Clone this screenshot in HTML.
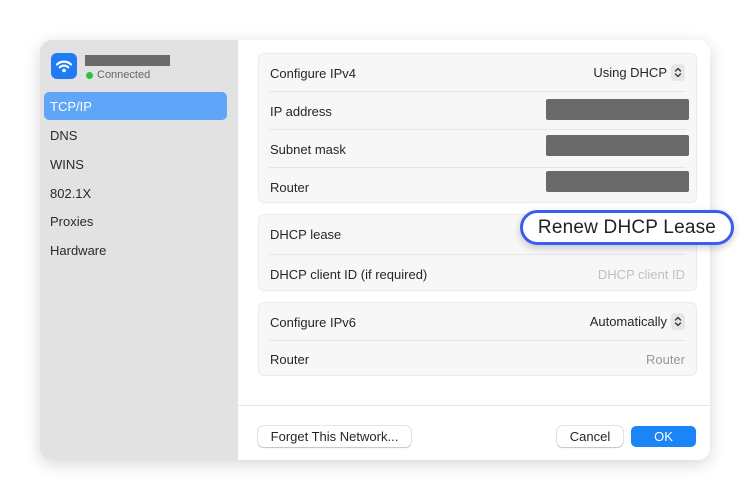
<!DOCTYPE html>
<html><head><style>
*{margin:0;padding:0;box-sizing:border-box}
body{width:750px;height:500px;background:#fff;font-family:"Liberation Sans",sans-serif;position:relative;overflow:hidden;color:#262626}
.win{position:absolute;left:40px;top:40px;width:670px;height:420px;border-radius:12px;background:#fff;box-shadow:0 4px 16px rgba(0,0,0,0.16);overflow:hidden}
.side{position:absolute;left:0;top:0;width:198px;height:420px;background:#e3e2e2}
.a{position:absolute}
.grp{position:absolute;left:218px;width:439px;background:#f7f7f7;border:1px solid #ebebeb;border-radius:6px}
.lbl{position:absolute;left:11px;font-size:13px;color:#262626}
.sep{position:absolute;left:10px;right:10px;height:1px;background:#e6e6e6}
.bar{position:absolute;left:287px;width:143px;height:21px;background:#696969;border-radius:2px}
.r{position:absolute;right:11px;font-size:13px;display:flex;align-items:center}
.stp{display:inline-block;width:14px;height:17px;background:#e6e6e6;border-radius:4px;margin-left:4px}
.nav{position:absolute;left:10px;font-size:13px;color:#2a2a2a}
.btn{position:absolute;top:386px;height:21px;border-radius:5px;background:#fff;box-shadow:0 0 0 0.5px rgba(0,0,0,0.2),0 1px 1px rgba(0,0,0,0.15);font-size:13px;text-align:center;line-height:21px}
</style></head><body>
<div class="win">
 <div class="side">
  <div class="a" style="left:11px;top:13px;width:26px;height:26px;border-radius:6px;background:#1f7cf5">
   <svg width="26" height="26" viewBox="0 0 26 26"><g fill="none" stroke="#fff" stroke-width="2.2" stroke-linecap="round"><path d="M6 11.5a10 10 0 0 1 14 0"/><path d="M8.8 14.3a6 6 0 0 1 8.4 0"/></g><circle cx="13" cy="17.5" r="1.8" fill="#fff"/></svg>
  </div>
  <div class="a" style="left:45px;top:15px;width:85px;height:11px;background:#6a6a6a"></div>
  <div class="a" style="left:46px;top:32px;width:7px;height:7px;border-radius:50%;background:#2ec23c"></div>
  <div class="a" style="left:57px;top:29px;font-size:11px;color:#666">Connected</div>
  <div class="a" style="left:4px;top:52px;width:183px;height:28px;border-radius:5px;background:#5fa6f8"></div>
  <div class="nav" style="top:59px;color:#fff">TCP/IP</div>
  <div class="nav" style="top:88px">DNS</div>
  <div class="nav" style="top:117px">WINS</div>
  <div class="nav" style="top:146px">802.1X</div>
  <div class="nav" style="top:174px">Proxies</div>
  <div class="nav" style="top:203px">Hardware</div>
 </div>
 <div class="grp" style="top:13px;height:150px">
  <div class="lbl" style="top:12px">Configure IPv4</div>
  <div class="r" style="top:10px">Using DHCP <span class="stp"><svg width="14" height="17" viewBox="0 0 14 17"><path d="M4.5 7L7 4.5 9.5 7M4.5 10L7 12.5 9.5 10" fill="none" stroke="#333" stroke-width="1.3" stroke-linecap="round" stroke-linejoin="round"/></svg></span></div>
  <div class="sep" style="top:37px"></div>
  <div class="lbl" style="top:50px">IP address</div>
  <div class="bar" style="top:45px"></div>
  <div class="sep" style="top:75px"></div>
  <div class="lbl" style="top:88px">Subnet mask</div>
  <div class="bar" style="top:81px"></div>
  <div class="sep" style="top:113px"></div>
  <div class="lbl" style="top:126px">Router</div>
  <div class="bar" style="top:117px"></div>
 </div>
 <div class="grp" style="top:174px;height:77px">
  <div class="lbl" style="top:12px">DHCP lease</div>
  <div class="sep" style="top:39px"></div>
  <div class="lbl" style="top:52px">DHCP client ID (if required)</div>
  <div class="r" style="top:52px;color:#c0c0c0">DHCP client ID</div>
 </div>
 <div class="grp" style="top:262px;height:74px">
  <div class="lbl" style="top:12px">Configure IPv6</div>
  <div class="r" style="top:10px">Automatically <span class="stp"><svg width="14" height="17" viewBox="0 0 14 17"><path d="M4.5 7L7 4.5 9.5 7M4.5 10L7 12.5 9.5 10" fill="none" stroke="#333" stroke-width="1.3" stroke-linecap="round" stroke-linejoin="round"/></svg></span></div>
  <div class="sep" style="top:37px"></div>
  <div class="lbl" style="top:49px">Router</div>
  <div class="r" style="top:49px;color:#999">Router</div>
 </div>
 <div class="a" style="left:198px;top:365px;width:472px;height:1px;background:#e6e6e6"></div>
 <div class="btn" style="left:218px;width:153px">Forget This Network...</div>
 <div class="btn" style="left:517px;width:66px">Cancel</div>
 <div class="btn" style="left:591px;width:65px;background:#1b84f7;color:#fff;box-shadow:none">OK</div>
</div>
<div class="a" style="left:520px;top:210px;width:214px;height:35px;border:3px solid #3b5cf2;border-radius:18px;background:#fff;box-shadow:0 3px 8px rgba(0,0,0,0.2);font-size:19px;line-height:29px;text-align:center;color:#222;letter-spacing:0.2px">Renew DHCP Lease</div>
</body></html>
